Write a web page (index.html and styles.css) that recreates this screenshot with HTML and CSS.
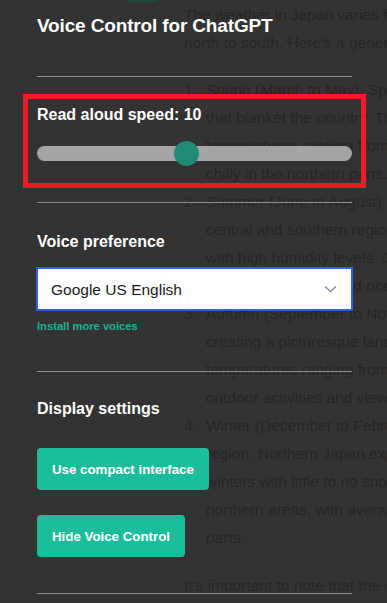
FILE: index.html
```html
<!DOCTYPE html>
<html>
<head>
    <title>Voice Control for ChatGPT</title>
    <link rel="stylesheet" href="styles.css">
</head>
<body>
    <div class="chat">
        <div class="top-tab"></div>
        <p>The weather in Japan varies from region to region due to its long stretch from<br>north to south. Here's a general overview of the weather in Japan throughout the year:</p>
        <ol>
            <li>Spring (March to May): Spring in Japan is known for its beautiful cherry blossoms<br>that blanket the country. The weather is generally mild and pleasant, with<br>temperatures ranging from 10°C to 20°C (50°F to 68°F). However, it can still be<br>chilly in the northern parts.</li>
            <li>Summer (June to August): Summers in Japan are hot and humid, particularly in the<br>central and southern regions. Temperatures can reach 30°C (86°F) or higher,<br>with high humidity levels. June and July bring<br>the rainy seasons, and occasional typhoons arrive in late summer.</li>
            <li>Autumn (September to November): Autumn brings cooler temperatures and colorful foliage,<br>creating a picturesque landscape. The weather is generally pleasant, with<br>temperatures ranging from 10°C to 20°C (50°F to 68°F), making it ideal for<br>outdoor activities and viewing autumn leaves.</li>
            <li>Winter (December to February): Winter weather varies greatly depending on the<br>region. Northern Japan experiences cold, snowy winters, while the south has mild<br>winters with little to no snow. Temperatures can drop below freezing in the<br>northern areas, with average temperatures ranging from 5°C to 10°C in southern<br>parts.</li>
        </ol>
        <p>It's important to note that the weather can vary from year to year.</p>
    </div>

    <div class="panel">
        <h1 class="title">Voice Control for ChatGPT</h1>
        <hr class="divider">

        <div class="speed">
            <label class="label" for="speed">Read aloud speed: 10</label>
            <input class="slider" id="speed" type="range" min="1" max="20" value="10">
        </div>
        <hr class="divider after-speed">

        <div class="label voice-label">Voice preference</div>
        <div class="select-wrap">
            <select class="voice-select">
                <option>Google US English</option>
            </select>
            <svg class="chevron" width="13" height="8" viewBox="0 0 13 8">
                <path d="M1 1.5 L6.5 6.5 L12 1.5" fill="none" stroke="#8e8ea0" stroke-width="1.6"/>
            </svg>
        </div>
        <a class="install" href="#">Install more voices</a>
        <hr class="divider after-voice">

        <div class="label display-label">Display settings</div>
        <button class="btn compact-btn">Use compact interface</button>
        <button class="btn hide-btn">Hide Voice Control</button>
        <hr class="divider after-buttons">
    </div>
</body>
</html>
```

FILE: styles.css
```css
body {
    margin: 0;
    height: 603px;
    overflow: hidden;
    background-color: #333333;
    font-family: "Liberation Sans", Arial, sans-serif;
    position: relative;
}

/* chat text behind the panel */
.chat {
    position: absolute;
    top: 1px;
    left: 184px;
    white-space: nowrap;
    font-size: 15.5px;
    line-height: 28px;
    color: #262626;
}

.chat p {
    margin: 0 0 19px;
}

.chat ol {
    margin: 0 0 20px;
    padding: 0;
    list-style: none;
    counter-reset: item;
}

.chat li {
    counter-increment: item;
    padding-left: 22px;
    text-indent: -22px;
}

.chat li::before {
    content: counter(item) ".";
    display: inline-block;
    width: 22px;
    text-indent: 0;
}

.top-tab {
    position: absolute;
    top: -1px;
    left: -55px;
    width: 29px;
    height: 2px;
    background-color: #1d4a3b;
}

.panel {
    position: relative;
    width: 315px;
    padding: 14px 0 0 37px;
    color: #ffffff;
}

.title {
    margin: 0;
    font-size: 19px;
    line-height: 24px;
    letter-spacing: -0.15px;
    font-weight: bold;
}

.divider {
    margin: 38px 0 0;
    border: none;
    height: 1px;
    background-color: #8e8e8e;
}

.label {
    display: block;
    font-size: 16px;
    line-height: 20px;
    font-weight: bold;
}

.speed {
    margin: 17px -14px 0;
    padding: 6px 9px 17px;
    border: 5px solid #ee1c25;
}

.slider {
    -webkit-appearance: none;
    appearance: none;
    display: block;
    width: 100%;
    height: 25px;
    margin: 16px 0 0;
    background: transparent;
}

.slider::-webkit-slider-runnable-track {
    height: 15px;
    border-radius: 8px;
    background-color: #a5a5a5;
}

.slider::-webkit-slider-thumb {
    -webkit-appearance: none;
    width: 25px;
    height: 25px;
    margin-top: -5px;
    border-radius: 50%;
    background-color: #1f8b74;
}

.after-speed {
    margin-top: 14px;
}

.voice-label {
    margin-top: 29px;
}

.select-wrap {
    position: relative;
    margin-top: 16px;
}

.voice-select {
    -webkit-appearance: none;
    appearance: none;
    display: block;
    width: 100%;
    height: 42px;
    padding: 0 0 0 13px;
    border: 1px solid #2a62e6;
    outline: 1px solid #2a62e6;
    border-radius: 0;
    background-color: #ffffff;
    color: #1a1a1a;
    font-family: "Liberation Sans", Arial, sans-serif;
    font-size: 15.5px;
}

.chevron {
    position: absolute;
    top: 17px;
    right: 15px;
}

.install {
    display: block;
    margin-top: 9px;
    font-size: 11.2px;
    line-height: 14px;
    font-weight: bold;
    color: #19b38f;
    text-decoration: none;
}

.after-voice {
    margin-top: 38px;
}

.display-label {
    margin-top: 27px;
}

.btn {
    display: block;
    height: 42px;
    padding: 0 15px;
    border: none;
    border-radius: 4px;
    background-color: #1bbd9b;
    color: #ffffff;
    font-family: "Liberation Sans", Arial, sans-serif;
    font-size: 13.3px;
    font-weight: bold;
}

.compact-btn {
    margin-top: 29px;
}

.hide-btn {
    margin-top: 25px;
}

.after-buttons {
    margin-top: 36px;
}
```
